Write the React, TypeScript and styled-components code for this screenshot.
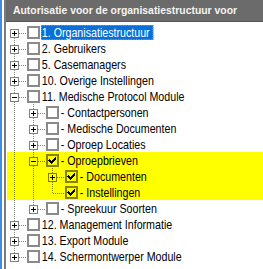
import React from 'react';
import styled, { createGlobalStyle } from 'styled-components';

const GlobalStyle = createGlobalStyle`
  html, body { margin: 0; padding: 0; background: #ffffff; }
  body { font-family: "Liberation Sans", Arial, sans-serif; }
`;

type Node = {
  label: string;
  checked?: boolean;
  hl?: boolean;
  selected?: boolean;
  expanded?: boolean;
  collapsedChildren?: boolean;
  children?: Node[];
};

const tree: Node[] = [
  { label: '1. Organisatiestructuur', collapsedChildren: true, selected: true },
  { label: '2. Gebruikers', collapsedChildren: true },
  { label: '5. Casemanagers', collapsedChildren: true },
  { label: '10. Overige Instellingen', collapsedChildren: true },
  {
    label: '11. Medische Protocol Module',
    expanded: true,
    children: [
      { label: '- Contactpersonen', collapsedChildren: true },
      { label: '- Medische Documenten', collapsedChildren: true },
      { label: '- Oproep Locaties', collapsedChildren: true },
      {
        label: '- Oproepbrieven',
        expanded: true,
        checked: true,
        hl: true,
        children: [
          { label: '- Documenten', collapsedChildren: true, checked: true, hl: true },
          { label: '- Instellingen', checked: true, hl: true },
        ],
      },
      { label: '- Spreekuur Soorten', collapsedChildren: true },
    ],
  },
  { label: '12. Management Informatie', collapsedChildren: true },
  { label: '13. Export Module', collapsedChildren: true },
  { label: '14. Schermontwerper Module', collapsedChildren: true },
];

type FlatRow = {
  node: Node;
  ancestors: boolean[];
  hasNext: boolean;
  isFirstRoot: boolean;
  hasBox: boolean;
};

function flatten(nodes: Node[], ancestors: boolean[], out: FlatRow[]) {
  nodes.forEach((n, i) => {
    const hasNext = i < nodes.length - 1;
    out.push({
      node: n,
      ancestors,
      hasNext,
      isFirstRoot: ancestors.length === 0 && i === 0,
      hasBox: !!(n.collapsedChildren || (n.children && n.children.length)),
    });
    if (n.expanded && n.children) flatten(n.children, [...ancestors, hasNext], out);
  });
  return out;
}

const Frame = styled.div`
  width: 263px;
  height: 269px;
  box-sizing: border-box;
  border-left: 2px solid #3b8ee8;
  padding-left: 2px;
  display: flex;
  overflow: hidden;
`;

const Panel = styled.div`
  flex: 1;
  border-left: 2px solid #7b7b7b;
  display: flex;
  flex-direction: column;
  min-width: 0;
`;

const Header = styled.div`
  height: 21px;
  background: #6b6b6b;
  border-bottom: 1px solid #575757;
  color: #f4f4f4;
  font-family: "Liberation Sans", Arial, sans-serif;
  font-weight: bold;
  font-size: 10.4px;
  line-height: 21px;
  padding-left: 7px;
  white-space: nowrap;
  overflow: hidden;
`;

const Tree = styled.ul`
  list-style: none;
  margin: 0;
  padding: 2px 0 0 1px;
`;

const Row = styled.li<{ $hl: boolean }>`
  display: flex;
  align-items: center;
  height: 16px;
  background: ${(p) => (p.$hl ? '#ffff00' : 'transparent')};
`;

const Cell = styled.svg`
  display: block;
  flex: none;
  width: 19px;
  height: 16px;
`;

const Check = styled.span<{ $hl: boolean }>`
  flex: none;
  box-sizing: border-box;
  width: 13px;
  height: 13px;
  margin-left: 1px;
  border: 2px solid ${(p) => (p.$hl ? '#858500' : '#8a8a8a')};
  display: flex;
  align-items: center;
  justify-content: center;
`;

const Label = styled.span<{ $selected: boolean }>`
  margin-left: 1px;
  padding-right: 3px;
  height: 15px;
  box-sizing: border-box;
  line-height: 14px;
  font-family: "Liberation Sans", Arial, sans-serif;
  font-size: 13px;
  white-space: nowrap;
  transform: scaleX(0.82);
  transform-origin: 0 50%;
  color: ${(p) => (p.$selected ? '#ffffff' : '#000000')};
  background: ${(p) => (p.$selected ? '#0a6fd6' : 'transparent')};
  border: 1px dotted ${(p) => (p.$selected ? '#f59029' : 'transparent')};
`;

const lineColor = (hl: boolean) => (hl ? '#808000' : '#808080');

function Connector({
  vertical,
  top,
  bottom,
  horizontal,
  box,
  expanded,
  hl,
}: {
  vertical?: boolean;
  top?: boolean;
  bottom?: boolean;
  horizontal?: boolean;
  box?: boolean;
  expanded?: boolean;
  hl: boolean;
}) {
  const c = lineColor(hl);
  const cy = 9;
  return (
    <Cell viewBox="0 0 19 16" shapeRendering="crispEdges">
      {vertical && <line x1={7.5} y1={0} x2={7.5} y2={16} stroke={c} strokeDasharray="1 1" />}
      {top && <line x1={7.5} y1={0} x2={7.5} y2={box ? cy - 4 : cy} stroke={c} strokeDasharray="1 1" />}
      {bottom && <line x1={7.5} y1={box ? cy + 5 : cy} x2={7.5} y2={16} stroke={c} strokeDasharray="1 1" />}
      {horizontal && (
        <line x1={box ? 12 : 8} y1={cy + 0.5} x2={19} y2={cy + 0.5} stroke={c} strokeDasharray="1 1" />
      )}
      {box && (
        <g>
          <rect x={3.5} y={cy - 3.5} width={8} height={8} fill={hl ? '#ffff00' : '#ffffff'} stroke={c} />
          <line x1={5} y1={cy + 0.5} x2={10} y2={cy + 0.5} stroke="#000" />
          {!expanded && <line x1={7.5} y1={cy - 2} x2={7.5} y2={cy + 3} stroke="#000" />}
        </g>
      )}
    </Cell>
  );
}

function CheckMark() {
  return (
    <svg width="9" height="9" viewBox="0 0 9 9" shapeRendering="crispEdges">
      <path d="M1 3h1v1h1v1h1v-1h1v-1h1v-1h1v-1h1v3h-1v1h-1v1h-1v1h-1v1h-1v-1h-1v-1h-1v-1h-1z" fill="#000" />
    </svg>
  );
}

export default function App() {
  const rows = flatten(tree, [], []);
  return (
    <>
      <GlobalStyle />
      <Frame>
        <Panel>
          <Header>Autorisatie voor de organisatiestructuur voor</Header>
          <Tree>
            {rows.map((r, i) => {
              const hl = !!r.node.hl;
              return (
                <Row key={i} $hl={hl}>
                  {r.ancestors.map((cont, j) => (
                    <Connector key={j} vertical={cont} hl={hl} />
                  ))}
                  <Connector
                    top={!r.isFirstRoot}
                    bottom={r.hasNext}
                    horizontal
                    box={r.hasBox}
                    expanded={r.node.expanded}
                    hl={hl}
                  />
                  <Check $hl={hl}>{r.node.checked && <CheckMark />}</Check>
                  <Label $selected={!!r.node.selected}>{r.node.label}</Label>
                </Row>
              );
            })}
          </Tree>
        </Panel>
      </Frame>
    </>
  );
}
